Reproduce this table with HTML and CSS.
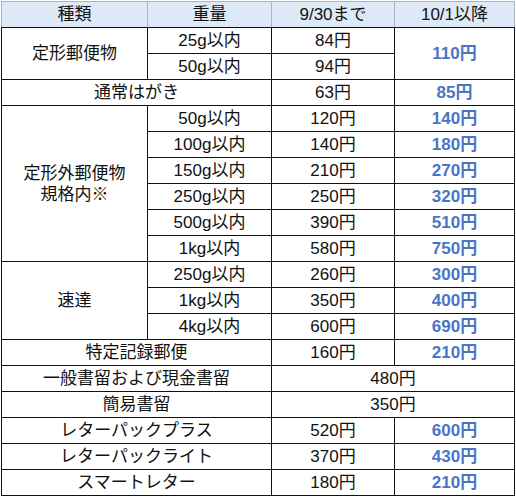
FILE: index.html
```html
<!DOCTYPE html>
<html lang="ja">
<head>
<meta charset="utf-8">
<link rel="stylesheet" href="styles.css">
</head>
<body>
<table class="rates">
  <colgroup>
    <col class="c1"><col class="c2"><col class="c3"><col class="c4">
  </colgroup>
  <thead>
    <tr><th>種類</th><th>重量</th><th>9/30まで</th><th>10/1以降</th></tr>
  </thead>
  <tbody>
    <tr><td rowspan="2">定形郵便物</td><td>25g以内</td><td>84円</td><td rowspan="2" class="new">110円</td></tr>
    <tr><td>50g以内</td><td>94円</td></tr>
    <tr><td colspan="2">通常はがき</td><td>63円</td><td class="new">85円</td></tr>
    <tr><td rowspan="6" class="multi">定形外郵便物<br>規格内※</td><td>50g以内</td><td>120円</td><td class="new">140円</td></tr>
    <tr><td>100g以内</td><td>140円</td><td class="new">180円</td></tr>
    <tr><td>150g以内</td><td>210円</td><td class="new">270円</td></tr>
    <tr><td>250g以内</td><td>250円</td><td class="new">320円</td></tr>
    <tr><td>500g以内</td><td>390円</td><td class="new">510円</td></tr>
    <tr><td>1kg以内</td><td>580円</td><td class="new">750円</td></tr>
    <tr><td rowspan="3">速達</td><td>250g以内</td><td>260円</td><td class="new">300円</td></tr>
    <tr><td>1kg以内</td><td>350円</td><td class="new">400円</td></tr>
    <tr><td>4kg以内</td><td>600円</td><td class="new">690円</td></tr>
    <tr><td colspan="2">特定記録郵便</td><td>160円</td><td class="new">210円</td></tr>
    <tr><td colspan="2">一般書留および現金書留</td><td colspan="2">480円</td></tr>
    <tr><td colspan="2">簡易書留</td><td colspan="2">350円</td></tr>
    <tr><td colspan="2">レターパックプラス</td><td>520円</td><td class="new">600円</td></tr>
    <tr><td colspan="2">レターパックライト</td><td>370円</td><td class="new">430円</td></tr>
    <tr><td colspan="2">スマートレター</td><td>180円</td><td class="new">210円</td></tr>
  </tbody>
</table>
</body>
</html>
```
FILE: styles.css
```css
html, body {
  margin: 0;
  padding: 0;
  background: #ffffff;
}
body {
  padding: 1px 0 0 1px;
  font-family: "Liberation Sans", "Noto Sans CJK JP", sans-serif;
  font-size: 17px;
  color: #111111;
}
.rates {
  border-collapse: collapse;
  table-layout: fixed;
  width: 513px;
}
.c1 { width: 146px; }
.c2 { width: 124px; }
.c3 { width: 123px; }
.c4 { width: 120px; }
.rates tr {
  height: 26px;
}
.rates th,
.rates td {
  padding: 0;
  text-align: center;
  vertical-align: middle;
  line-height: 20px;
  white-space: nowrap;
}
.rates th {
  font-weight: normal;
  background: #dde9f6;
  border: 1px solid #a9b4c0;
  border-bottom: 1px solid #111111;
}
.rates td {
  border: 1px solid #111111;
}
.rates td.multi {
  line-height: 21px;
}
.rates td.new {
  color: #4a74c4;
  font-weight: bold;
}
```
